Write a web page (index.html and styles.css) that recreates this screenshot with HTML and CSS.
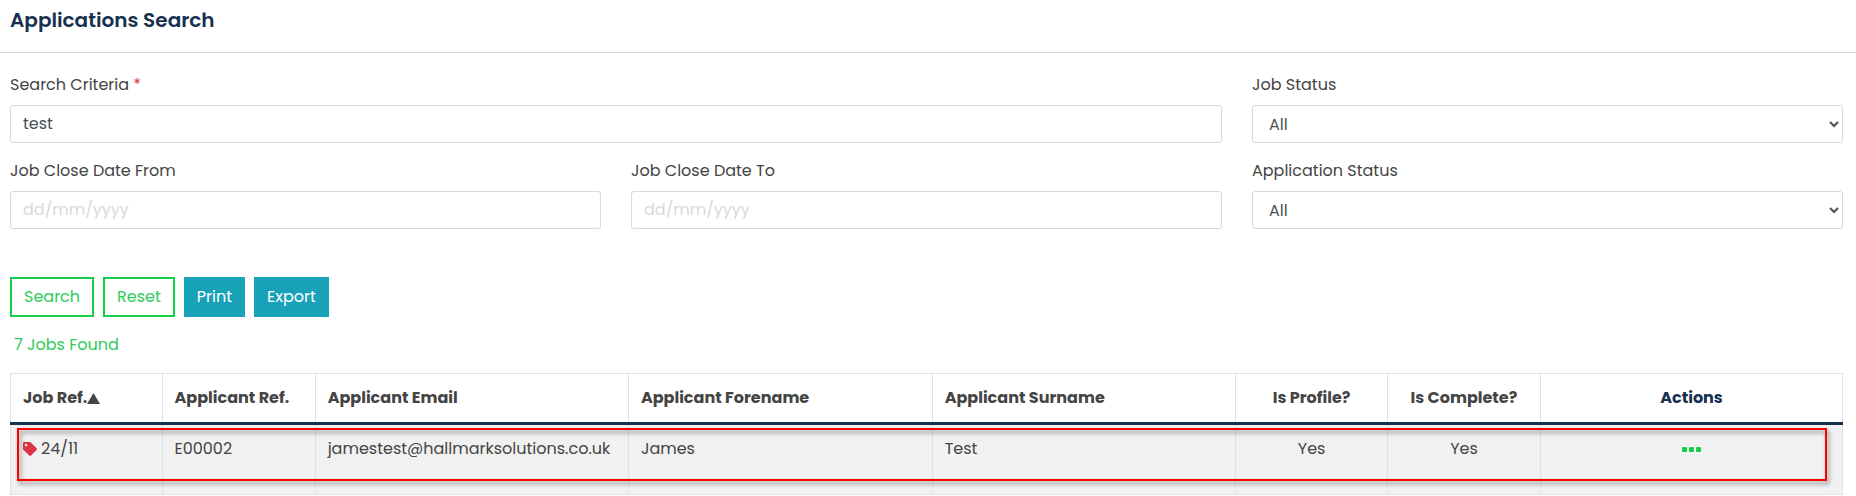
FILE: index.html
```html
<!DOCTYPE html>
<html lang="en">
  <head>
    <meta charset="UTF-8" />
    <meta name="viewport" content="width=device-width, initial-scale=1.0" />
    <title>Applications Search</title>
    <link rel="stylesheet" href="styles.css">
  </head>
  <body>
    <header class="page-header">
      <h1>Applications Search</h1>
    </header>

    <main class="content">
      <form>
        <div class="form-grid">
          <div class="form-group wide">
            <label for="criteria">Search Criteria <span class="required">*</span></label>
            <input type="text" id="criteria" value="test" required />
          </div>
          <div class="form-group">
            <label for="jobStatus">Job Status</label>
            <select id="jobStatus">
              <option>All</option>
            </select>
          </div>
          <div class="form-group">
            <label for="dateFrom">Job Close Date From</label>
            <input type="text" id="dateFrom" placeholder="dd/mm/yyyy" />
          </div>
          <div class="form-group">
            <label for="dateTo">Job Close Date To</label>
            <input type="text" id="dateTo" placeholder="dd/mm/yyyy" />
          </div>
          <div class="form-group">
            <label for="appStatus">Application Status</label>
            <select id="appStatus">
              <option>All</option>
            </select>
          </div>
        </div>

        <div class="buttons">
          <button type="button" class="btn btn-outline">Search</button>
          <button type="reset" class="btn btn-outline">Reset</button>
          <button type="button" class="btn btn-info">Print</button>
          <button type="button" class="btn btn-info">Export</button>
        </div>
      </form>

      <p class="found">7 Jobs Found</p>

      <div class="results">
        <table>
          <colgroup>
            <col class="col-job" />
            <col class="col-ref" />
            <col class="col-email" />
            <col class="col-name" />
            <col class="col-name" />
            <col class="col-job" />
            <col class="col-ref" />
            <col />
          </colgroup>
          <thead>
            <tr>
              <th><span class="sort">Job Ref.<svg width="13" height="11" viewBox="0 0 12 11" preserveAspectRatio="none" aria-hidden="true"><path d="M6 0l6 11H0z" fill="currentColor" /></svg></span></th>
              <th>Applicant Ref.</th>
              <th>Applicant Email</th>
              <th>Applicant Forename</th>
              <th>Applicant Surname</th>
              <th class="center">Is Profile?</th>
              <th class="center">Is Complete?</th>
              <th class="center actions">Actions</th>
            </tr>
          </thead>
          <tbody>
            <tr>
              <td>
                <span class="job-ref">
                  <svg width="14" height="14" viewBox="0 0 512 512" aria-hidden="true"><path fill="#dc3545" d="M0 252.118V48C0 21.49 21.49 0 48 0h204.118a48 48 0 0 1 33.941 14.059l211.882 211.882c18.745 18.745 18.745 49.137 0 67.882L293.823 497.941c-18.745 18.745-49.137 18.745-67.882 0L14.059 286.059A48 48 0 0 1 0 252.118zM112 64c-26.51 0-48 21.49-48 48s21.49 48 48 48 48-21.49 48-48-21.49-48-48-48z" /></svg>
                  24/11
                </span>
              </td>
              <td>E00002</td>
              <td>jamestest@hallmarksolutions.co.uk</td>
              <td>James</td>
              <td>Test</td>
              <td class="center">Yes</td>
              <td class="center">Yes</td>
              <td class="center">
                <button type="button" class="more" aria-label="Actions">
                  <svg width="19" height="5" viewBox="0 0 19 5" aria-hidden="true"><g fill="#15d04b"><rect width="5" height="5" rx="1" /><rect x="7" width="5" height="5" rx="1" /><rect x="14" width="5" height="5" rx="1" /></g></svg>
                </button>
              </td>
            </tr>
          </tbody>
        </table>
        <div class="highlight"></div>
      </div>
    </main>
  </body>
</html>
```
FILE: styles.css
```css
* {
  box-sizing: border-box;
}

body {
  margin: 0;
  font-family: Poppins, Inter, sans-serif;
  font-size: 16px;
  line-height: 24px;
  color: #444;
  background: #fff;
}

.page-header {
  padding: 8px 10px 20px;
  border-bottom: 1px solid #d9d9d9;
}

h1 {
  margin: 0;
  font-size: 20px;
  font-weight: 600;
  line-height: 24px;
  color: #16304f;
}

.content {
  padding: 20px 13px 0 10px;
}

.form-grid {
  display: grid;
  grid-template-columns: repeat(3, 1fr);
  gap: 16px 30px;
}

.form-group {
  display: flex;
  flex-direction: column;
  gap: 8px;
}

.wide {
  grid-column: span 2;
}

.required {
  color: #dc3545;
}

input,
select {
  width: 100%;
  height: 38px;
  padding: 6px 12px;
  font: inherit;
  color: #495057;
  background: #fff;
  border: 1px solid #d9d9d9;
  border-radius: 3px;
}

input {
  padding-bottom: 8px;
}

input::placeholder {
  color: #d9d9d9;
}

.buttons {
  display: flex;
  gap: 9px;
  margin-top: 48px;
}

.btn {
  height: 40px;
  padding: 0 12px;
  font: inherit;
  border: 2px solid #15d04b;
  cursor: pointer;
}

.btn-outline {
  color: #2ecc5b;
  background: #fff;
}

.btn-info {
  padding: 0 11px;
  color: #fff;
  background: #18a2b8;
  border-color: #18a2b8;
}

.found {
  margin: 16px 0;
  padding-left: 4px;
  color: #2ecc5b;
}

.results {
  position: relative;
}

table {
  width: 100%;
  table-layout: fixed;
  border-collapse: collapse;
}

.col-job {
  width: 8.27%;
}

.col-ref {
  width: 8.36%;
}

.col-email {
  width: 17.1%;
}

.col-name {
  width: 16.58%;
}

th,
td {
  padding: 12px;
  text-align: left;
  white-space: nowrap;
  border: 1px solid #dee2e6;
}

th {
  font-weight: 700;
  border-bottom: 3px solid #16304f;
}

td {
  padding-bottom: 33px;
  background: #f1f1f1;
}

.center {
  text-align: center;
}

.actions {
  color: #16304f;
}

.sort,
.job-ref {
  display: flex;
  align-items: center;
}

.job-ref {
  gap: 4px;
}

.more {
  display: inline-flex;
  padding: 0;
  vertical-align: middle;
  background: none;
  border: none;
  cursor: pointer;
}

/* frame drawn over the selected row */
.highlight {
  position: absolute;
  top: 55px;
  right: 16px;
  bottom: 14px;
  left: 7px;
  border: 2px solid #f00;
  filter: drop-shadow(2px 3px 2px rgba(0, 0, 0, 0.45));
  pointer-events: none;
}
```
